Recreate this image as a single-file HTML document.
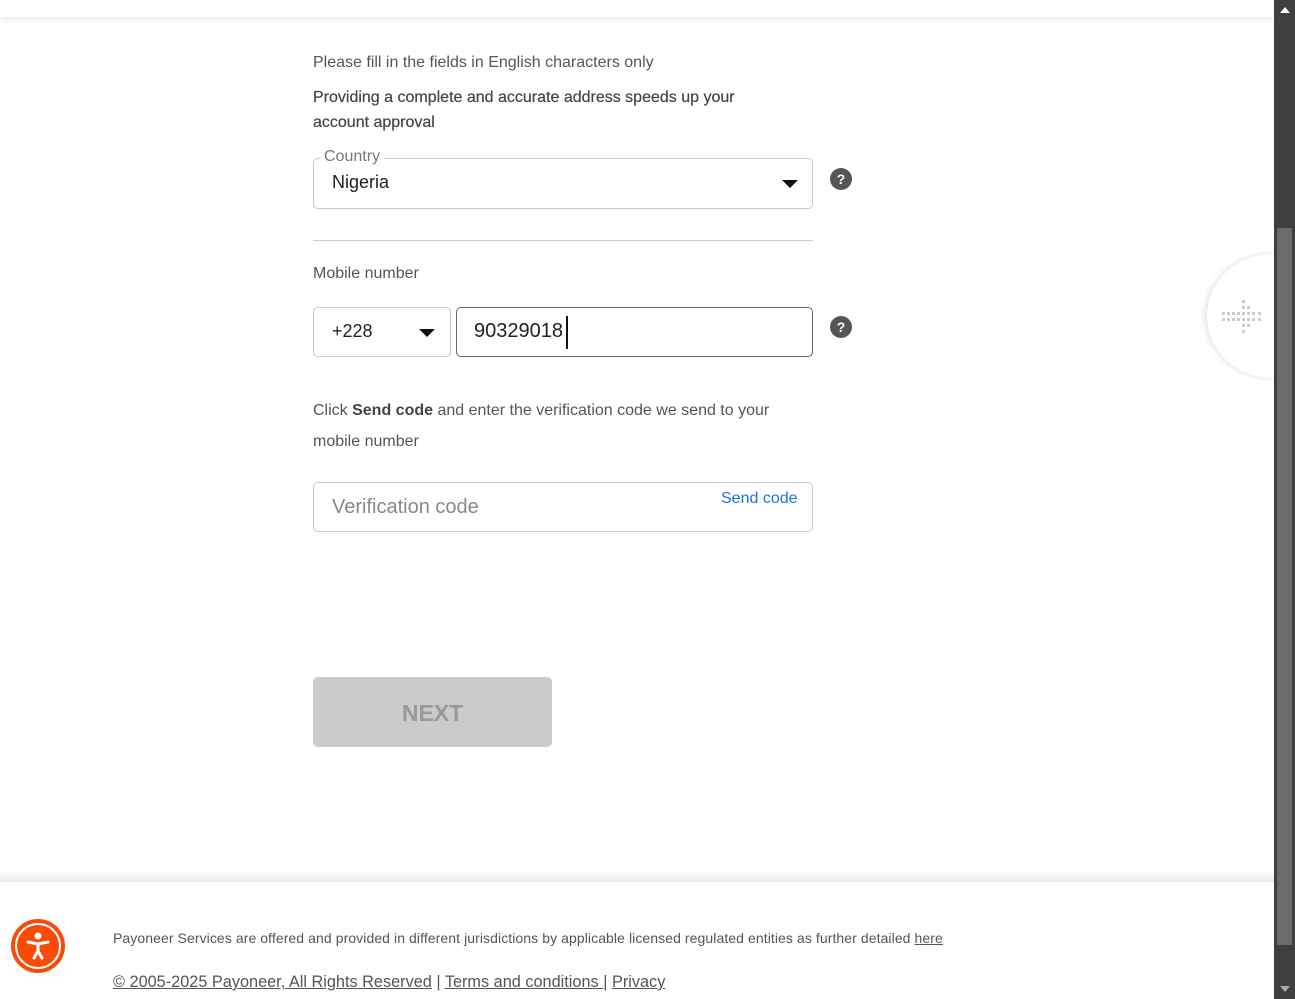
<!DOCTYPE html>
<html><head><style>
*{box-sizing:border-box;margin:0;padding:0}
body{width:1295px;height:999px;position:relative;overflow:hidden;background:#fff;font-family:"Liberation Sans",sans-serif;color:#555}
.abs{position:absolute}
.box{position:absolute;border:1px solid #c8c8c8;border-radius:5px;background:#fff}
.q{position:absolute;width:22px;height:22px;border-radius:50%;background:#555;color:#fff;font-weight:bold;font-size:14px;text-align:center;line-height:22px}
.tri{position:absolute;width:0;height:0;border-left:8px solid transparent;border-right:8px solid transparent;border-top:8px solid #111}
</style></head><body>
<div class="abs" style="left:0;top:0;width:1274px;height:17px;background:#fff;box-shadow:0 3px 6px rgba(0,0,0,.08)"></div>
<div class="abs" style="left:313px;top:54px;font-size:16px;color:#555">Please fill in the fields in English characters only</div>
<div class="abs" style="left:313px;top:85px;font-size:16px;line-height:25px;color:#444;width:460px;-webkit-text-stroke:0.2px #444">Providing a complete and accurate address speeds up your account approval</div>
<div class="box" style="left:313px;top:158px;width:500px;height:51px"></div>
<div class="abs" style="left:320px;top:148px;background:#fff;padding:0 4px;font-size:16px;color:#777">Country</div>
<div class="abs" style="left:332px;top:172px;font-size:18px;color:#222">Nigeria</div>
<div class="tri" style="left:782px;top:180px"></div>
<div class="q" style="left:830px;top:168px">?</div>
<div class="abs" style="left:313px;top:240px;width:500px;height:1px;background:#ccc"></div>
<div class="abs" style="left:313px;top:265px;font-size:16px;color:#555">Mobile number</div>
<div class="box" style="left:313px;top:307px;width:138px;height:50px"></div>
<div class="abs" style="left:332px;top:321px;font-size:18px;color:#222">+228</div>
<div class="tri" style="left:419px;top:329px"></div>
<div class="box" style="left:456px;top:307px;width:357px;height:50px;border-color:#666"></div>
<div class="abs" style="left:474px;top:320px;font-size:20px;color:#222">90329018</div>
<div class="abs" style="left:566px;top:316px;width:2px;height:33px;background:#111"></div>
<div class="q" style="left:830px;top:316px">?</div>
<div class="abs" style="left:313px;top:395px;font-size:16px;line-height:31px;color:#555;width:490px">Click <b style="color:#444">Send code</b> and enter the verification code we send to your mobile number</div>
<div class="box" style="left:313px;top:482px;width:500px;height:50px"></div>
<div class="abs" style="left:332px;top:496px;font-size:20px;color:#888">Verification code</div>
<div class="abs" style="left:721px;top:490px;font-size:16px;color:#1a73e8">Send code</div>
<div class="abs" style="left:313px;top:677px;width:239px;height:70px;background:#cbcbcb;border-radius:5px;color:#999;font-weight:bold;font-size:23px;text-align:center;line-height:72px">NEXT</div>
<div class="abs" style="left:1207px;top:254px;width:130px;height:124px;border-radius:50%;background:#fff;box-shadow:-2px 0 6px rgba(0,0,0,.12)"></div>
<svg class="abs" style="left:1220px;top:298px" width="44" height="36">
<g fill="#ccc"><rect x="2" y="14" width="3" height="3"/><rect x="7" y="14" width="3" height="3"/><rect x="12" y="14" width="3" height="3"/><rect x="17" y="14" width="3" height="3"/><rect x="22" y="14" width="3" height="3"/><rect x="27" y="14" width="3" height="3"/><rect x="32" y="14" width="3" height="3"/><rect x="38" y="14" width="3" height="3"/>
<rect x="2" y="20" width="3" height="3"/><rect x="7" y="20" width="3" height="3"/><rect x="12" y="20" width="3" height="3"/><rect x="17" y="20" width="3" height="3"/><rect x="22" y="20" width="3" height="3"/><rect x="27" y="20" width="3" height="3"/><rect x="32" y="20" width="3" height="3"/><rect x="38" y="20" width="3" height="3"/>
<rect x="22" y="2" width="3" height="3"/><rect x="22" y="8" width="3" height="3"/><rect x="27" y="8" width="3" height="3"/><rect x="22" y="26" width="3" height="3"/><rect x="27" y="26" width="3" height="3"/><rect x="22" y="32" width="3" height="3"/></g></svg>
<div class="abs" style="left:0;top:870px;width:1274px;height:12px;background:linear-gradient(#fff,#eee);border-bottom:1px solid #e8e8e8"></div>
<svg class="abs" style="left:10px;top:918px" width="56" height="56"><circle cx="28" cy="28" r="27" fill="#fa4a0a"/><circle cx="28" cy="28" r="22" fill="none" stroke="#fff" stroke-width="2"/><circle cx="28" cy="18" r="3.5" fill="#fff"/><path d="M18 24 L28 26 L38 24 M28 26 L28 33 M28 33 L24 40 M28 33 L32 40" stroke="#fff" stroke-width="3" fill="none" stroke-linecap="round" stroke-linejoin="round"/></svg>
<div class="abs" style="left:113px;top:930px;font-size:14px;color:#555;letter-spacing:0.08px">Payoneer Services are offered and provided in different jurisdictions by applicable licensed regulated entities as further detailed <u>here</u></div>
<div class="abs" style="left:113px;top:973px;font-size:16.3px;color:#555"><u>© 2005-2025 Payoneer, All Rights Reserved</u> | <u>Terms and conditions </u>| <u>Privacy</u></div>
<div class="abs" style="left:1274px;top:0;width:21px;height:999px;background:#3f3f3f"></div>
<div class="abs" style="left:1277px;top:228px;width:15px;height:717px;background:#6b6b6b"></div>
<div class="abs" style="left:1280px;top:7px;width:0;height:0;border-left:5px solid transparent;border-right:5px solid transparent;border-bottom:6px solid #fff"></div>
<div class="abs" style="left:1280px;top:986px;width:0;height:0;border-left:5px solid transparent;border-right:5px solid transparent;border-top:6px solid #aaa"></div>
</body></html>
